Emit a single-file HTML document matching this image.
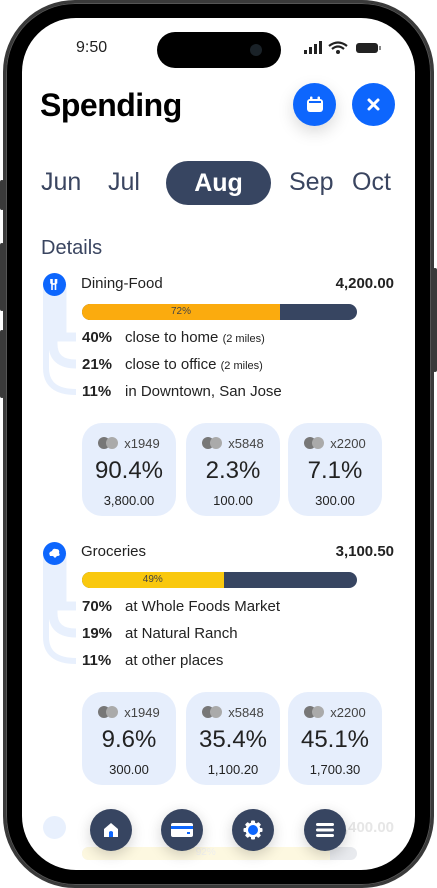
<!DOCTYPE html>
<html><head><meta charset="utf-8"><style>
*{margin:0;padding:0;box-sizing:border-box}
body{width:437px;height:888px;background:#fff;position:relative;overflow:hidden;font-family:"Liberation Sans",sans-serif;color:#1c1c1e}
.abs{position:absolute}
.frame{left:3px;top:0;width:431px;height:888px;border-radius:72px;background:#000;border:3px solid #3a3a3a;box-shadow:inset 0 0 0 1px #555}
.screen{left:22px;top:18px;width:393px;height:852px;border-radius:54px;background:#fff;overflow:hidden}
.btn{background:#3a3a3a;width:4px;border-radius:2px}
.m{font-size:25px;color:#3a4560;top:168px}
.t{font-size:15px;color:#222}
.pct{font-weight:bold}
.card{width:94px;height:93px;background:#e6eefc;border-radius:20px;text-align:center}
.card .c{margin-top:12px;font-size:13px;color:#444;height:16px;display:flex;justify-content:center;align-items:center;gap:4px}
.dots{width:22px;height:12px;position:relative;display:inline-block}
.dots:before{content:"";position:absolute;left:0;top:0;width:12px;height:12px;border-radius:50%;background:#777}
.dots:after{content:"";position:absolute;left:8px;top:0;width:12px;height:12px;border-radius:50%;background:#aaa}
.card .big{font-size:24px;margin-top:6px;color:#222}
.card .sm{font-size:13px;margin-top:8px;color:#222}
.bar{height:16px;border-radius:8px;background:#374561;overflow:hidden;width:275px;left:82px}
.bar div{height:16px;font-size:10px;text-align:center;line-height:16px;color:#444}
.nav{width:42px;height:42px;border-radius:50%;background:#374561;box-shadow:0 4px 14px rgba(0,0,0,.18);display:flex;align-items:center;justify-content:center;top:809px}
</style></head><body>
<div class="abs btn" style="left:0;top:180px;height:30px"></div>
<div class="abs btn" style="left:0;top:243px;height:68px"></div>
<div class="abs btn" style="left:0;top:330px;height:68px"></div>
<div class="abs btn" style="left:433px;top:268px;height:104px"></div>
<div class="abs frame"></div>
<div class="abs screen"></div>
<div class="abs" style="left:76px;top:39px;font-size:16px;color:#222">9:50</div>
<div class="abs" style="left:157px;top:32px;width:124px;height:36px;border-radius:18px;background:#000"></div>
<div class="abs" style="left:250px;top:44px;width:12px;height:12px;border-radius:50%;background:#1a2228"></div>
<svg class="abs" style="left:303px;top:40px" width="80" height="16" viewBox="0 0 80 16">
<rect x="1" y="10" width="3" height="4" fill="#222"/><rect x="6" y="7" width="3" height="7" fill="#222"/><rect x="11" y="4" width="3" height="10" fill="#222"/><rect x="16" y="1" width="3" height="13" fill="#222"/>
<path d="M26 6 Q35 -1 44 6" stroke="#222" stroke-width="2.2" fill="none"/><path d="M29 9 Q35 4 41 9" stroke="#222" stroke-width="2.2" fill="none"/><circle cx="35" cy="12" r="2" fill="#222"/>
<rect x="53" y="3" width="22" height="10" rx="3" fill="#222"/><rect x="76" y="6" width="2" height="4" fill="#888"/>
</svg>
<div class="abs" style="left:40px;top:87px;font-size:32px;font-weight:bold;color:#000;letter-spacing:-0.5px">Spending</div>
<div class="abs" style="left:293px;top:83px;width:43px;height:43px;border-radius:50%;background:#0d66fd;box-shadow:0 6px 16px rgba(0,0,0,.15)"></div>
<svg class="abs" style="left:305px;top:95px" width="20" height="20" viewBox="0 0 20 20"><rect x="2" y="4" width="16" height="13" rx="3" fill="#fff"/><rect x="5" y="1.5" width="2.5" height="5" rx="1" fill="#fff"/><rect x="12.5" y="1.5" width="2.5" height="5" rx="1" fill="#fff"/><rect x="4" y="6" width="12" height="2" fill="#0d66fd"/></svg>
<div class="abs" style="left:352px;top:83px;width:43px;height:43px;border-radius:50%;background:#0d66fd"></div>
<svg class="abs" style="left:366px;top:97px" width="15" height="15"><path d="M3 3L12 12M12 3L3 12" stroke="#fff" stroke-width="3" stroke-linecap="round"/></svg>
<div class="abs m" style="left:41px">Jun</div>
<div class="abs m" style="left:108px">Jul</div>
<div class="abs" style="left:166px;top:161px;width:105px;height:44px;border-radius:22px;background:#374561;color:#fff;font-size:25px;font-weight:bold;text-align:center;line-height:44px">Aug</div>
<div class="abs m" style="left:289px">Sep</div>
<div class="abs m" style="left:352px">Oct</div>
<div class="abs" style="left:41px;top:237px;font-size:20px;color:#3a4560">Details</div>

<!-- section 1 -->
<svg class="abs" style="left:40px;top:284px" width="40" height="120"><g fill="none" stroke="#e8f0fd"><path stroke-width="9" d="M22 0 V53 H36"/><path stroke-width="9" d="M13 0 V60 Q13 80 36 80"/><path stroke-width="6" d="M6 0 V84 Q6 108 36 108"/></g></svg>
<div class="abs" style="left:43px;top:273px;width:23px;height:23px;border-radius:50%;background:#0d66fd"></div>
<svg class="abs" style="left:49px;top:278px" width="11" height="13"><path d="M3 1V12M6.5 1V12M2 1V5Q4.5 7 7.5 5V1" stroke="#fff" stroke-width="1.6" fill="none"/></svg>
<div class="abs t" style="left:81px;top:275px">Dining-Food</div>
<div class="abs t" style="right:43px;top:275px;font-weight:bold">4,200.00</div>
<div class="abs bar" style="top:304px"><div style="width:72%;background:#fbab0e">72%</div></div>
<div class="abs t" style="left:82px;top:329px"><span class="pct">40%</span></div><div class="abs t" style="left:125px;top:329px">close to home <span style="font-size:11px">(2 miles)</span></div>
<div class="abs t" style="left:82px;top:356px"><span class="pct">21%</span></div><div class="abs t" style="left:125px;top:356px">close to office <span style="font-size:11px">(2 miles)</span></div>
<div class="abs t" style="left:82px;top:383px"><span class="pct">11%</span></div><div class="abs t" style="left:125px;top:383px">in Downtown, San Jose</div>
<div class="abs card" style="left:82px;top:423px"><div class="c"><span class="dots"></span>x1949</div><div class="big">90.4%</div><div class="sm">3,800.00</div></div>
<div class="abs card" style="left:186px;top:423px"><div class="c"><span class="dots"></span>x5848</div><div class="big">2.3%</div><div class="sm">100.00</div></div>
<div class="abs card" style="left:288px;top:423px"><div class="c"><span class="dots"></span>x2200</div><div class="big">7.1%</div><div class="sm">300.00</div></div>

<!-- section 2 -->
<svg class="abs" style="left:40px;top:553px" width="40" height="120"><g fill="none" stroke="#e8f0fd"><path stroke-width="9" d="M22 0 V53 H36"/><path stroke-width="9" d="M13 0 V60 Q13 80 36 80"/><path stroke-width="6" d="M6 0 V84 Q6 108 36 108"/></g></svg>
<div class="abs" style="left:43px;top:542px;width:23px;height:23px;border-radius:50%;background:#0d66fd"></div>
<svg class="abs" style="left:47px;top:546px" width="15" height="15"><path d="M3 10Q1 6 5 5Q6 2 9 3Q13 3 12 7Q14 10 10 10L8 12L6 10Z" fill="#fff"/></svg>
<div class="abs t" style="left:81px;top:543px">Groceries</div>
<div class="abs t" style="right:43px;top:543px;font-weight:bold">3,100.50</div>
<div class="abs bar" style="top:572px"><div style="width:51.5%;background:#f9c80e">49%</div></div>
<div class="abs t" style="left:82px;top:598px"><span class="pct">70%</span></div><div class="abs t" style="left:125px;top:598px">at Whole Foods Market</div>
<div class="abs t" style="left:82px;top:625px"><span class="pct">19%</span></div><div class="abs t" style="left:125px;top:625px">at Natural Ranch</div>
<div class="abs t" style="left:82px;top:652px"><span class="pct">11%</span></div><div class="abs t" style="left:125px;top:652px">at other places</div>
<div class="abs card" style="left:82px;top:692px"><div class="c"><span class="dots"></span>x1949</div><div class="big">9.6%</div><div class="sm">300.00</div></div>
<div class="abs card" style="left:186px;top:692px"><div class="c"><span class="dots"></span>x5848</div><div class="big">35.4%</div><div class="sm">1,100.20</div></div>
<div class="abs card" style="left:288px;top:692px"><div class="c"><span class="dots"></span>x2200</div><div class="big">45.1%</div><div class="sm">1,700.30</div></div>

<!-- section 3 faded -->
<div class="abs" style="left:43px;top:816px;width:23px;height:23px;border-radius:50%;background:#e8f0fd"></div>
<div class="abs t" style="right:43px;top:819px;color:#e6e6e6;font-weight:bold">2,400.00</div>
<div class="abs" style="left:82px;top:847px;width:275px;height:13px;border-radius:7px;background:#e8eaee;overflow:hidden"><div style="width:90%;height:13px;background:#fdf8e0;font-size:10px;color:#eee;text-align:center">92%</div></div>

<!-- nav -->
<div class="abs nav" style="left:90px"><svg width="18" height="18"><path d="M2 8L9 2L16 8V16H2Z" fill="#fff"/><path d="M7 16V11Q9 9 11 11V16Z" fill="#0d66fd"/></svg></div>
<div class="abs nav" style="left:161px"><svg width="22" height="16"><rect x="0" y="1" width="22" height="14" rx="2" fill="#fff"/><rect x="0" y="4" width="22" height="3" fill="#0d66fd"/><rect x="16" y="10" width="3" height="2" fill="#0d66fd"/></svg></div>
<div class="abs nav" style="left:232px"><svg width="20" height="20" viewBox="0 0 20 20"><g fill="#fff"><circle cx="10" cy="10" r="7.5"/><rect x="8" y="0.5" width="4" height="19" rx="1"/><rect x="0.5" y="8" width="19" height="4" rx="1"/><rect x="8" y="0.5" width="4" height="19" rx="1" transform="rotate(45 10 10)"/><rect x="8" y="0.5" width="4" height="19" rx="1" transform="rotate(-45 10 10)"/></g><circle cx="10" cy="10" r="5" fill="#0d66fd"/></svg></div>
<div class="abs nav" style="left:304px"><svg width="18" height="16"><rect x="0" y="1" width="18" height="3" rx="1.5" fill="#fff"/><rect x="0" y="6.5" width="18" height="3" rx="1.5" fill="#fff"/><rect x="0" y="12" width="18" height="3" rx="1.5" fill="#fff"/></svg></div>
</body></html>
